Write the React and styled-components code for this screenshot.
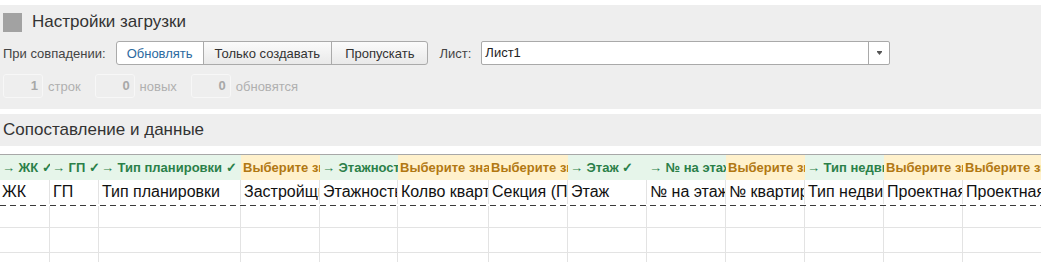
import React from "react";
import styled, { createGlobalStyle } from "styled-components";

const Global = createGlobalStyle`
  html, body { margin: 0; padding: 0; background: #fff; }
  body { font-family: "Liberation Sans", Arial, sans-serif; color: #333; }
`;

const Page = styled.div`
  width: 1041px;
  height: 262px;
  overflow: hidden;
  padding-top: 5px;
  box-sizing: border-box;
`;

const Panel = styled.section`
  background: #eeeeee;
  padding: 7px 3px 11px;
  display: flex;
  flex-direction: column;
  gap: 9px;
`;

const PanelHeader = styled.div`
  display: flex;
  align-items: center;
  gap: 10px;
  height: 20px;
`;

const Square = styled.span`
  width: 19px;
  height: 19px;
  background: #a2a2a2;
  display: inline-block;
`;

const Title = styled.h2`
  margin: 0;
  font-size: 17px;
  font-weight: normal;
  color: #333;
  line-height: 20px;
`;

const ControlRow = styled.div`
  display: flex;
  align-items: center;
  height: 24px;
  font-size: 13px;
  color: #444;
`;

const Label = styled.span`
  margin-right: ${(p) => p.$gap || 10}px;
  white-space: nowrap;
`;

const ButtonGroup = styled.div`
  display: flex;
  height: 24px;
  margin-right: 11px;
`;

const SegButton = styled.button`
  font-family: inherit;
  font-size: 13px;
  height: 24px;
  padding: 0 ${(p) => p.$pad}px;
  border: 1px solid #aaa;
  margin-left: -1px;
  color: ${(p) => (p.$active ? "#2d6aa0" : "#333")};
  background: ${(p) =>
    p.$active ? "#fff" : "linear-gradient(#fbfbfb, #e9e9e9)"};
  cursor: pointer;
  &:first-child { border-radius: 3px 0 0 3px; margin-left: 0; }
  &:last-child { border-radius: 0 3px 3px 0; }
`;

const Select = styled.div`
  width: 409px;
  height: 24px;
  box-sizing: border-box;
  border: 1px solid #a9a9a9;
  border-radius: 2px;
  background: #fff;
  display: flex;
  align-items: stretch;
`;

const SelectValue = styled.span`
  flex: 1;
  padding-left: 3px;
  line-height: 22px;
  color: #222;
  font-size: 13px;
`;

const SelectArrow = styled.span`
  width: 20px;
  border-left: 1px solid #a9a9a9;
  display: flex;
  align-items: center;
  justify-content: center;
`;

const CounterRow = styled.div`
  display: flex;
  align-items: center;
  height: 24px;
  gap: 14px;
`;

const Counter = styled.div`
  display: flex;
  align-items: center;
  gap: 5px;
`;

const CounterBox = styled.span`
  width: 40px;
  height: 24px;
  box-sizing: border-box;
  border: 1px solid #f7f7f7;
  border-radius: 3px;
  text-align: right;
  padding-right: 4px;
  line-height: 22px;
  font-size: 13px;
  font-weight: bold;
  color: #a8a8a8;
`;

const CounterLabel = styled.span`
  font-size: 13px;
  color: #b0b0b0;
`;

const SectionBar = styled.section`
  background: #eeeeee;
  margin-top: 5px;
  height: 32px;
  padding: 0 3px;
  display: flex;
  align-items: center;
`;

const COLS = "50px 49px 142px 79px 78px 91px 79px 79px 79px 79px 79px 79px 90px";

const Grid = styled.div`
  margin-top: 8px;
  border-top: 1px solid #a8a8a8;
`;

const Row = styled.div`
  display: grid;
  grid-template-columns: ${COLS};
  height: ${(p) => p.$h}px;
  border-bottom: ${(p) => (p.$line ? "1px solid #e3e3e3" : "none")};
`;

const MapCell = styled.div`
  background: ${(p) => (p.$ok ? "#e6f5ea" : "#fff1cc")};
  color: ${(p) => (p.$ok ? "#2b8049" : "#b27812")};
  font-size: 13px;
  font-weight: bold;
  line-height: 26px;
  padding-left: 2px;
  white-space: nowrap;
  overflow: hidden;
`;

const DataCell = styled.div`
  font-size: 16px;
  color: #111;
  line-height: 24px;
  padding-left: 3px;
  white-space: nowrap;
  overflow: hidden;
  border-right: 1px solid #e3e3e3;
  &:first-child { padding-left: 2px; }
`;

const BodyCell = styled.div`
  border-right: 1px solid #e3e3e3;
`;

const Dash = styled.div`
  height: 1px;
  margin-top: 1px;
  background: repeating-linear-gradient(to right, #3a3a3a 0 6px, transparent 6px 10px);
`;

const columns = [
  { map: "→ ЖК ✓", ok: true, name: "ЖК" },
  { map: "→ ГП ✓", ok: true, name: "ГП" },
  { map: "→ Тип планировки ✓", ok: true, name: "Тип планировки" },
  { map: "Выберите значение", ok: false, name: "Застройщик" },
  { map: "→ Этажность ✓", ok: true, name: "Этажность" },
  { map: "Выберите значение", ok: false, name: "Колво квартир" },
  { map: "Выберите значение", ok: false, name: "Секция (П)" },
  { map: "→ Этаж ✓", ok: true, name: "Этаж" },
  { map: "→ № на этаже ✓", ok: true, name: "№ на этаже" },
  { map: "Выберите значение", ok: false, name: "№ квартиры" },
  { map: "→ Тип недвижимости ✓", ok: true, name: "Тип недвижимости" },
  { map: "Выберите значение", ok: false, name: "Проектная площадь" },
  { map: "Выберите значение", ok: false, name: "Проектная площадь" },
];

export default function App() {
  return (
    <Page>
      <Global />
      <Panel>
        <PanelHeader>
          <Square />
          <Title>Настройки загрузки</Title>
        </PanelHeader>
        <ControlRow>
          <Label>При совпадении:</Label>
          <ButtonGroup>
            <SegButton $active $pad={10}>Обновлять</SegButton>
            <SegButton $pad={11}>Только создавать</SegButton>
            <SegButton $pad={13}>Пропускать</SegButton>
          </ButtonGroup>
          <Label>Лист:</Label>
          <Select>
            <SelectValue>Лист1</SelectValue>
            <SelectArrow>
              <svg width="5" height="4" viewBox="0 0 5 4">
                <path d="M0 0h5v1L2.5 4 0 1z" fill="#555" />
              </svg>
            </SelectArrow>
          </Select>
        </ControlRow>
        <CounterRow>
          <Counter>
            <CounterBox>1</CounterBox>
            <CounterLabel>строк</CounterLabel>
          </Counter>
          <Counter>
            <CounterBox>0</CounterBox>
            <CounterLabel>новых</CounterLabel>
          </Counter>
          <Counter>
            <CounterBox>0</CounterBox>
            <CounterLabel>обновятся</CounterLabel>
          </Counter>
        </CounterRow>
      </Panel>
      <SectionBar>
        <Title>Сопоставление и данные</Title>
      </SectionBar>
      <Grid>
        <Row $h={25}>
          {columns.map((c, i) => (
            <MapCell key={i} $ok={c.ok}>{c.map}</MapCell>
          ))}
        </Row>
        <Row $h={24}>
          {columns.map((c, i) => (
            <DataCell key={i}>{c.name}</DataCell>
          ))}
        </Row>
        <Dash />
        <Row $h={21} $line>
          {columns.map((c, i) => <BodyCell key={i} />)}
        </Row>
        <Row $h={24} $line>
          {columns.map((c, i) => <BodyCell key={i} />)}
        </Row>
        <Row $h={24} $line>
          {columns.map((c, i) => <BodyCell key={i} />)}
        </Row>
      </Grid>
    </Page>
  );
}
